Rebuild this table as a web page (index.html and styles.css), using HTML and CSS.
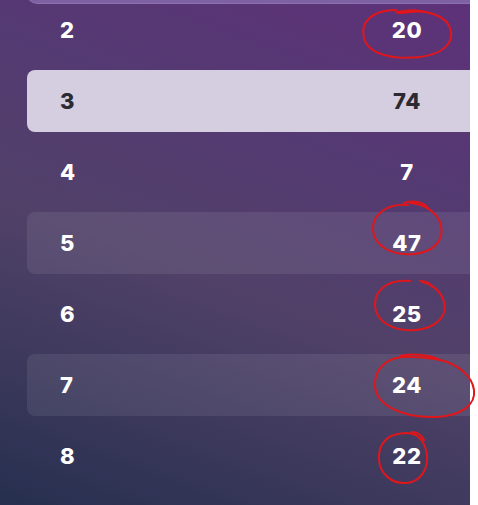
FILE: index.html
```html
<!DOCTYPE html>
<html lang="en">
<head>
  <meta charset="UTF-8" />
  <title>Leaderboard</title>
  <link rel="stylesheet" href="styles.css">
</head>
<body>

  <div class="board">
    <div class="board-header"></div>

    <div class="rows">
      <div class="row"><span class="rank">2</span><span class="score">20</span></div>
      <div class="row current"><span class="rank">3</span><span class="score">74</span></div>
      <div class="row"><span class="rank">4</span><span class="score">7</span></div>
      <div class="row shaded"><span class="rank">5</span><span class="score">47</span></div>
      <div class="row"><span class="rank">6</span><span class="score">25</span></div>
      <div class="row shaded"><span class="rank">7</span><span class="score">24</span></div>
      <div class="row"><span class="rank">8</span><span class="score">22</span></div>
    </div>
  </div>

  <!-- Hand-drawn review marks on top of the screenshot -->
  <svg class="marks" width="478" height="505" viewBox="0 0 478 505">
    <path d="M396 10 C372 10 360 22 364 38 C368 54 392 60 420 57 C444 54 455 42 450 28 C446 16 428 10 410 12 C402 13 398 14 396 12 M398 12 C410 9 424 10 432 14" />
    <path d="M408 205 C388 203 372 214 373 230 C374 246 392 256 414 254 C434 252 444 240 441 226 C438 212 424 204 410 203 M404 203 C414 200 424 202 428 208" />
    <path d="M410 281 C388 279 374 290 375 306 C376 322 394 332 416 330 C436 328 448 316 444 302 C441 291 432 284 422 282 M420 281 C426 281 430 283 432 287" />
    <path d="M412 357 C388 355 374 368 375 386 C376 404 400 418 436 417 C462 416 476 404 474 390 C472 376 458 364 440 360 C430 358 420 357 412 357 M400 356 C414 353 430 355 440 360" />
    <path d="M398 434 C384 436 378 448 379 460 C380 474 392 484 406 483 C420 482 428 470 427 456 C426 444 420 434 408 433 C402 433 398 434 398 434 M412 432 C418 432 422 436 424 440" />
  </svg>

</body>
</html>
```

FILE: styles.css
```css
* {
  box-sizing: border-box;
  margin: 0;
  padding: 0;
}

body {
  position: relative;
  font-family: Inter, "DejaVu Sans", sans-serif;
  background-color: #ffffff;
  width: 478px;
  height: 505px;
  overflow: hidden;
}

.board {
  position: relative;
  width: 470px;
  height: 505px;
  overflow: hidden;
  background: linear-gradient(200deg, #5e3179 0%, #543a72 30%, #514169 55%, #3f3a5e 75%, #262f4f 100%);
}

.board-header {
  position: absolute;
  top: -30px;
  left: 27px;
  width: 480px;
  height: 34px;
  border-radius: 10px;
  background: linear-gradient(to bottom, #72549a, #7e62a3);
  border-bottom: 1px solid #8a70ad;
}

/* Rows */
.rows {
  display: flex;
  flex-direction: column;
  gap: 9px;
  margin-top: -1px;
  padding-left: 27px;
}

.row {
  display: grid;
  grid-template-columns: 1fr 80px;
  align-items: center;
  width: 460px;
  height: 62px;
  padding: 0 40px 0 33px;
  border-radius: 8px;
  color: #ffffff;
  font-size: 22px;
  font-weight: 800;
  letter-spacing: 0.6px;
}

.row .score {
  text-align: center;
}

.row.current {
  background-color: #d5cde0;
  color: #2b2a30;
}

.row.shaded {
  background-color: rgba(255, 255, 255, 0.08);
}

/* Review marks overlay */
.marks {
  position: absolute;
  top: 0;
  left: 0;
  pointer-events: none;
}

.marks path {
  fill: none;
  stroke: #e0161b;
  stroke-width: 2;
  stroke-linecap: round;
}
```
